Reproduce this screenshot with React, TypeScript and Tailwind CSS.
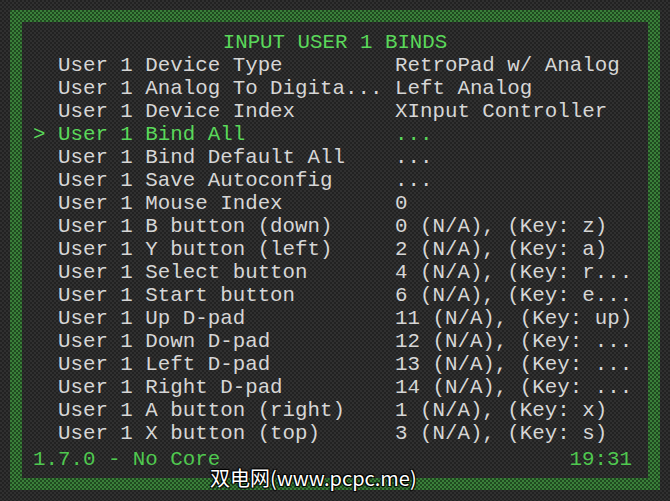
import React from "react";

const rows = [
  { label: "User 1 Device Type", value: "RetroPad w/ Analog" },
  { label: "User 1 Analog To Digita...", value: "Left Analog" },
  { label: "User 1 Device Index", value: "XInput Controller" },
  { label: "User 1 Bind All", value: "...", active: true },
  { label: "User 1 Bind Default All", value: "..." },
  { label: "User 1 Save Autoconfig", value: "..." },
  { label: "User 1 Mouse Index", value: "0" },
  { label: "User 1 B button (down)", value: "0 (N/A), (Key: z)" },
  { label: "User 1 Y button (left)", value: "2 (N/A), (Key: a)" },
  { label: "User 1 Select button", value: "4 (N/A), (Key: r..." },
  { label: "User 1 Start button", value: "6 (N/A), (Key: e..." },
  { label: "User 1 Up D-pad", value: "11 (N/A), (Key: up)" },
  { label: "User 1 Down D-pad", value: "12 (N/A), (Key: ..." },
  { label: "User 1 Left D-pad", value: "13 (N/A), (Key: ..." },
  { label: "User 1 Right D-pad", value: "14 (N/A), (Key: ..." },
  { label: "User 1 A button (right)", value: "1 (N/A), (Key: x)" },
  { label: "User 1 X button (top)", value: "3 (N/A), (Key: s)" },
];

const App = () => {
  return (
    <div
      className="relative w-[670px] h-[501px] overflow-hidden p-[10px] bg-[repeating-conic-gradient(#303030_0_25%,#222222_0_50%)] bg-[length:4px_4px] text-[20.8px] leading-[23px]"
      style={{ fontFamily: '"Liberation Mono", "DejaVu Sans Mono", monospace' }}
    >
      <div className="h-[480px] w-[650px] p-[12px] bg-[repeating-conic-gradient(#3a7f3a_0_25%,#1f4a1f_0_50%)] bg-[length:4px_4px]">
        <div className="flex h-full flex-col px-[11px] pt-[9px] pb-[7px] bg-[repeating-conic-gradient(#303030_0_25%,#222222_0_50%)] bg-[length:4px_4px]">
          <div className="text-center text-[#5ad85a] whitespace-pre">INPUT USER 1 BINDS</div>
          {rows.map((row, i) => (
            <div
              key={i}
              className={`flex whitespace-pre ${row.active ? "text-[#5ad85a]" : "text-[#d6d6d6]"}`}
            >
              <span className="w-[362px] shrink-0">
                {(row.active ? "> " : "  ") + row.label}
              </span>
              <span>{row.value}</span>
            </div>
          ))}
          <div className="mt-auto flex justify-between pr-[5px] text-[#4fc84f] whitespace-pre">
            <span>1.7.0 - No Core</span>
            <span>19:31</span>
          </div>
        </div>
      </div>
      <div
        className="absolute left-[210px] top-[465px] text-[20px] leading-[26px] text-white [text-shadow:1px_1px_1px_#000,-1px_-1px_1px_#000,1px_-1px_1px_#000,-1px_1px_1px_#000]"
        style={{ fontFamily: '"Noto Sans CJK SC", "Noto Sans", sans-serif' }}
      >
        双电网(www.pcpc.me)
      </div>
    </div>
  );
};

export default App;
